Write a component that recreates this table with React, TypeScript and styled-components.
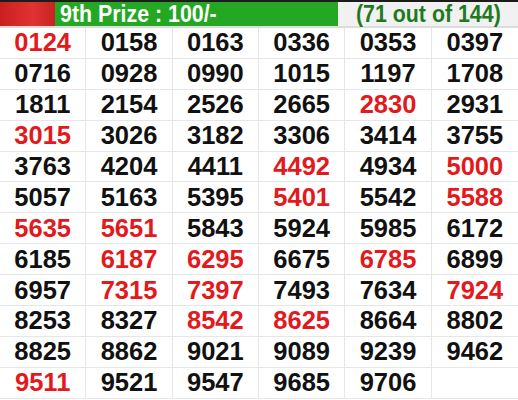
import styled, { createGlobalStyle } from 'styled-components'

const GlobalStyle = createGlobalStyle`
  html, body {
    margin: 0;
    padding: 0;
    background: #ffffff;
  }
  body {
    font-family: 'Liberation Sans', Arial, sans-serif;
  }
`

type Ticket = {
  num: string
  hit?: boolean
}

// * marks the numbers shown in red
const raw = `0124* 0158 0163 0336 0353 0397
0716 0928 0990 1015 1197 1708
1811 2154 2526 2665 2830* 2931
3015* 3026 3182 3306 3414 3755
3763 4204 4411 4492* 4934 5000*
5057 5163 5395 5401* 5542 5588*
5635* 5651* 5843 5924 5985 6172
6185 6187* 6295* 6675 6785* 6899
6957 7315* 7397* 7493 7634 7924*
8253 8327 8542* 8625* 8664 8802
8825 8862 9021 9089 9239 9462
9511* 9521 9547 9685 9706`

const tickets: Ticket[] = raw
  .split(/\s+/)
  .filter(Boolean)
  .map((t) => ({ num: t.replace('*', ''), hit: t.endsWith('*') }))

const Page = styled.div`
  width: 518px;
  height: 400px;
  overflow: hidden;
  background: #ffffff;
`

const Header = styled.div`
  display: grid;
  grid-template-columns: 55px 283px 1fr;
  height: 24px;
  border-top: 2px solid #1c1c1c;
  border-bottom: 2px solid #dcdcdc;
`

const RedBlock = styled.div`
  background: linear-gradient(90deg, #c9201f 0%, #e03332 60%, #c72322 100%);
`

const PrizeTitle = styled.div`
  background: #24a824;
  color: #ffffff;
  font-weight: bold;
  font-size: 24px;
  line-height: 24px;
  padding-left: 5px;
  white-space: nowrap;
`

const Count = styled.div`
  display: flex;
  justify-content: center;
  background: #f1f1f1;
  color: #1f7a1f;
  font-weight: bold;
  font-size: 24px;
  line-height: 24px;
  white-space: nowrap;
`

const Narrow = styled.span<{ $origin: string }>`
  display: inline-block;
  transform: scaleX(0.89);
  transform-origin: ${(p) => p.$origin};
`

const Grid = styled.div`
  display: grid;
  grid-template-columns: repeat(6, 1fr);
  grid-auto-rows: 30.9px;
`

const Cell = styled.div<{ $hit?: boolean }>`
  display: flex;
  align-items: center;
  justify-content: center;
  border-right: 1px solid #e6e6e6;
  border-bottom: 1px solid #e6e6e6;
  font-weight: bold;
  font-size: 25.5px;
  color: ${(p) => (p.$hit ? '#e3191c' : '#111111')};
  &:nth-child(6n) {
    border-right: none;
  }
`

const App = () => {
  const cells = [...tickets]
  while (cells.length % 6 !== 0) cells.push({ num: '' })
  return (
    <Page>
      <GlobalStyle />
      <Header>
        <RedBlock />
        <PrizeTitle>
          <Narrow $origin="left center">9th Prize : 100/-</Narrow>
        </PrizeTitle>
        <Count>
          <Narrow $origin="center">(71 out of 144)</Narrow>
        </Count>
      </Header>
      <Grid>
        {cells.map((t, i) => (
          <Cell key={i} $hit={t.hit}>
            {t.num}
          </Cell>
        ))}
      </Grid>
    </Page>
  )
}

export default App
